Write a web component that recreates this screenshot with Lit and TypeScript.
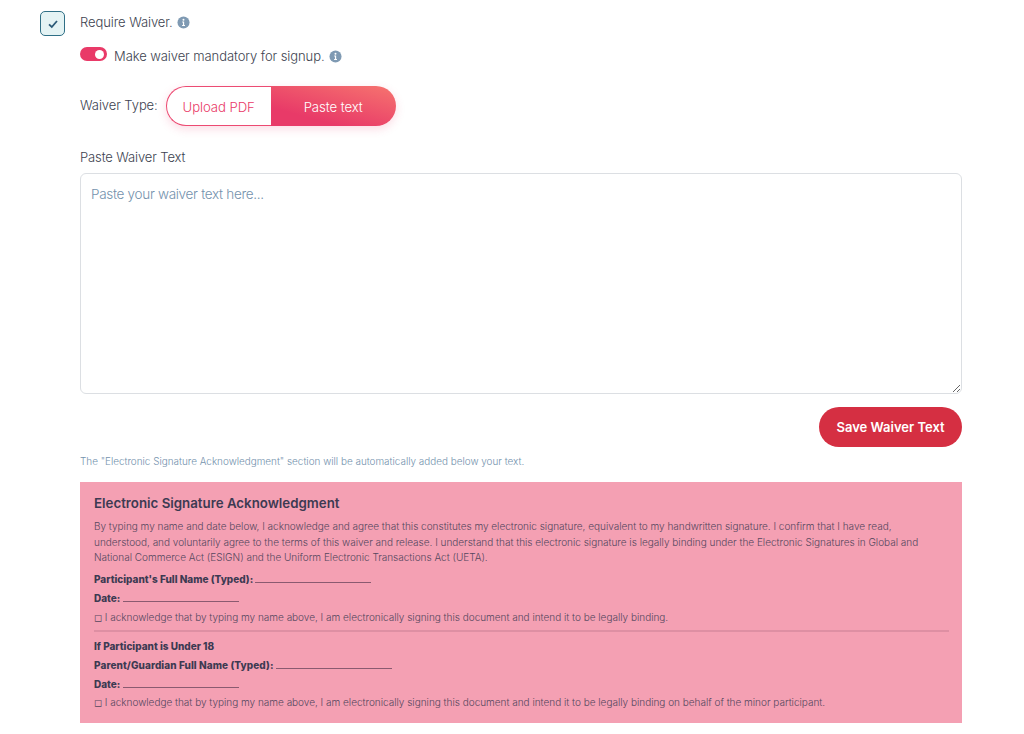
import { LitElement, html, css } from "lit";
import { customElement } from "lit/decorators.js";

const info = html`<svg class="info" viewBox="0 0 14 14" aria-hidden="true"><circle cx="7" cy="7" r="6.5" fill="#7f9ab3"/><circle cx="7" cy="4" r="1.05" fill="#fff"/><path d="M5.6 6h2.1v3.7h.9v1H5.5v-1h.9V7h-.8z" fill="#fff"/></svg>`;

@customElement("app-root")
export class AppRoot extends LitElement {
  static styles = css`
    :host { display: block; width: 1024px; height: 734px; overflow: hidden; background: #fff; font-family: Inter, "Liberation Sans", sans-serif; color: #3d4350; box-sizing: border-box; }
    .page { display: flex; gap: 15px; padding: 11px 62px 0 40px; }
    .check { flex: none; width: 25px; height: 25px; box-sizing: border-box; border: 1px solid #2f6f86; border-radius: 5px; background: #e4f3f4; display: flex; align-items: center; justify-content: center; }
    .check svg { width: 12px; height: 12px; }
    .main { flex: 1; min-width: 0; display: flex; flex-direction: column; }
    .line { display: flex; align-items: center; font-size: 13px; font-weight: 300; letter-spacing: -0.08px; line-height: 22px; }
    .info { width: 13px; height: 13px; margin-left: 4px; flex: none; }
    .mand { margin-top: 12px; height: 22px; }
    .toggle { flex: none; width: 27px; height: 14px; border-radius: 7px; background: #e93a68; margin: 0 7px 4px 0; display: flex; justify-content: flex-end; align-items: center; padding-right: 3px; box-sizing: border-box; }
    .toggle i { display: block; width: 9px; height: 9px; border-radius: 50%; background: #fff; }
    .type { margin-top: 19px; gap: 8px; }
    .type-label { margin-bottom: 2px; }
    .seg { display: flex; width: 230px; height: 40px; border-radius: 20px; box-shadow: 0 3px 10px rgba(233,58,104,.18); }
    .seg span { display: flex; align-items: center; justify-content: center; padding-top: 2px; box-sizing: border-box; font-size: 13.2px; font-weight: 300; }
    .seg .a { width: 105px; border: 1px solid #ec4a72; border-right: 0; border-radius: 20px 0 0 20px; background: #fff; color: #e93a68; }
    .seg .b { flex: 1; border-radius: 0 20px 20px 0; background: linear-gradient(195deg, #f6746f 0%, #e83a68 75%); color: #fff; }
    .lbl { margin-top: 20px; font-size: 13px; font-weight: 300; line-height: 22px; letter-spacing: -0.12px; }
    .ta { display: block; margin-top: 5px; width: 100%; height: 221px; box-sizing: border-box; border: 1px solid #dcdfe3; border-radius: 6px; padding: 10px; font: 300 13.5px/20px Inter, "Liberation Sans", sans-serif; letter-spacing: -0.3px; resize: vertical; outline: none; background: #fff; }
    .ta::placeholder { color: #7492ad; opacity: 1; }
    .actions { display: flex; justify-content: flex-end; margin-top: 13px; }
    .save { width: 143px; height: 40px; border: 0; border-radius: 20px; background: #d52f42; color: #fff; font: 600 13px Inter, "Liberation Sans", sans-serif; padding: 0; }
    .note { margin-top: 7px; font-size: 9.92px; font-weight: 300; line-height: 14px; color: #7492ad; }
    .panel { margin-top: 14px; background: #f4a0b3; padding: 11px 13px 0 14px; height: 241px; box-sizing: border-box; color: #3d3a52; }
    .panel h3 { margin: 0; font-size: 13.3px; font-weight: 600; line-height: 20px; }
    .panel p { margin: 0; font-size: 10px; font-weight: 300; line-height: 15px; color: #54475e; }
    .panel .body { margin-top: 6px; line-height: 15.5px; letter-spacing: -0.01px; }
    .panel .f { font-weight: 800; color: #3d3a52; line-height: 19px; }
    .panel .f1 { margin-top: 4px; }
    .panel .parent { letter-spacing: 0.08px; }
    .panel .ack { margin-top: 2px; letter-spacing: -0.01px; }
    .panel hr { border: 0; height: 2px; background: #de8fa3; margin: 5px 0 0; }
    .panel .u18 { margin-top: 5px; }
    .panel .last { margin-top: 1px; }
    .panel .blank { display: inline-block; width: 116px; border-bottom: 1px solid #8a5a70; height: 10px; vertical-align: baseline; }
  `;

  render() {
    const blank = html`<span class="blank"></span>`;
    return html`<div class="page">
      <div class="check"><svg viewBox="0 0 12 12"><path d="M2 6.4 4.8 9 10 3" fill="none" stroke="#2c5a78" stroke-width="1.8"/></svg></div>
      <div class="main">
        <div class="line req">Require Waiver.${info}</div>
        <div class="line mand"><span class="toggle"><i></i></span>Make waiver mandatory for signup.${info}</div>
        <div class="line type"><span class="type-label">Waiver Type:</span>
          <div class="seg"><span class="a">Upload PDF</span><span class="b">Paste text</span></div>
        </div>
        <div class="lbl">Paste Waiver Text</div>
        <textarea class="ta" placeholder="Paste your waiver text here..."></textarea>
        <div class="actions"><button class="save">Save Waiver Text</button></div>
        <div class="note">The "Electronic Signature Acknowledgment" section will be automatically added below your text.</div>
        <div class="panel">
          <h3>Electronic Signature Acknowledgment</h3>
          <p class="body">By typing my name and date below, I acknowledge and agree that this constitutes my electronic signature, equivalent to my handwritten signature. I confirm that I have read, understood, and voluntarily agree to the terms of this waiver and release. I understand that this electronic signature is legally binding under the Electronic Signatures in Global and National Commerce Act (ESIGN) and the Uniform Electronic Transactions Act (UETA).</p>
          <p class="f f1">Participant's Full Name (Typed): ${blank}</p>
          <p class="f">Date: ${blank}</p>
          <p class="ack">◻ I acknowledge that by typing my name above, I am electronically signing this document and intend it to be legally binding.</p>
          <hr />
          <p class="f u18">If Participant is Under 18</p>
          <p class="f parent">Parent/Guardian Full Name (Typed): ${blank}</p>
          <p class="f">Date: ${blank}</p>
          <p class="ack last">◻ I acknowledge that by typing my name above, I am electronically signing this document and intend it to be legally binding on behalf of the minor participant.</p>
        </div>
      </div>
    </div>`;
  }
}
